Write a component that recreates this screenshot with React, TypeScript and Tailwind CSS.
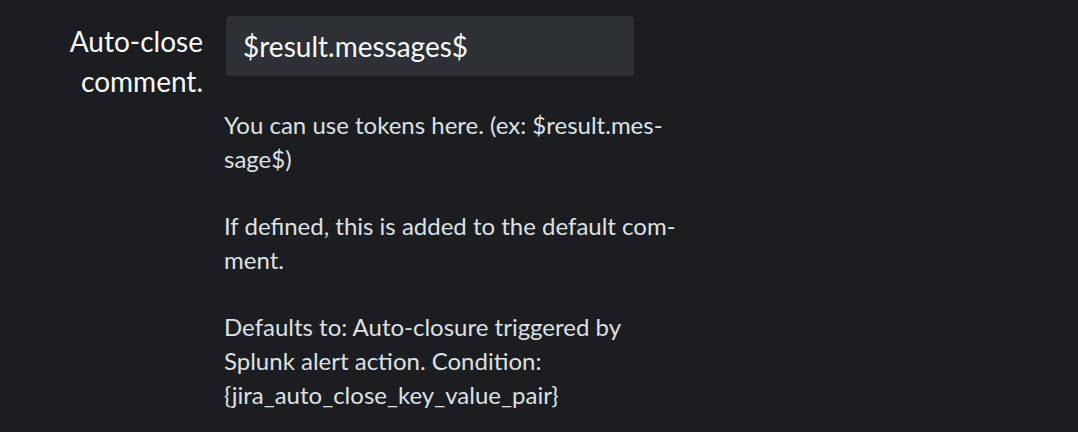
/**
 * AutoCloseCommentField
 * Alert action setting row: label, text input and help text
 */

import React from 'react';

const helpParagraphs = [
  'You can use tokens here. (ex: $result.mes\u00ADsage$)',
  'If defined, this is added to the default com\u00ADment.',
  'Defaults to: Auto-closure triggered by Splunk alert action. Condition: {jira_auto_close_key_value_pair}',
];

export default function App() {
  const [value, setValue] = React.useState('$result.messages$');

  return (
    <div className="min-h-[432px] w-full bg-[#1b1d21] font-['Lato',sans-serif]">
      <div className="flex pt-4">
        {/* Label column */}
        <label
          htmlFor="auto-close-comment"
          className="w-[204px] shrink-0 pt-[5px] pr-px text-right text-[28px] leading-[40px] text-[#f7f8fa]"
        >
          Auto-close
          <br />
          comment.
        </label>

        {/* Control column */}
        <div className="ml-[22px] flex flex-col">
          <input
            id="auto-close-comment"
            value={value}
            onChange={(e) => setValue(e.target.value)}
            className="h-[60px] w-[408px] rounded-[4px] bg-[#2d3034] px-[17px] text-[28px] text-[#f7f8fa] outline-none"
          />

          <div className="-ml-[2px] mt-8 w-[468px] space-y-[33px] text-[24px] leading-[34px] text-[#dde0e4]">
            {helpParagraphs.map((text) => (
              <p key={text}>{text}</p>
            ))}
          </div>
        </div>
      </div>
    </div>
  );
}
